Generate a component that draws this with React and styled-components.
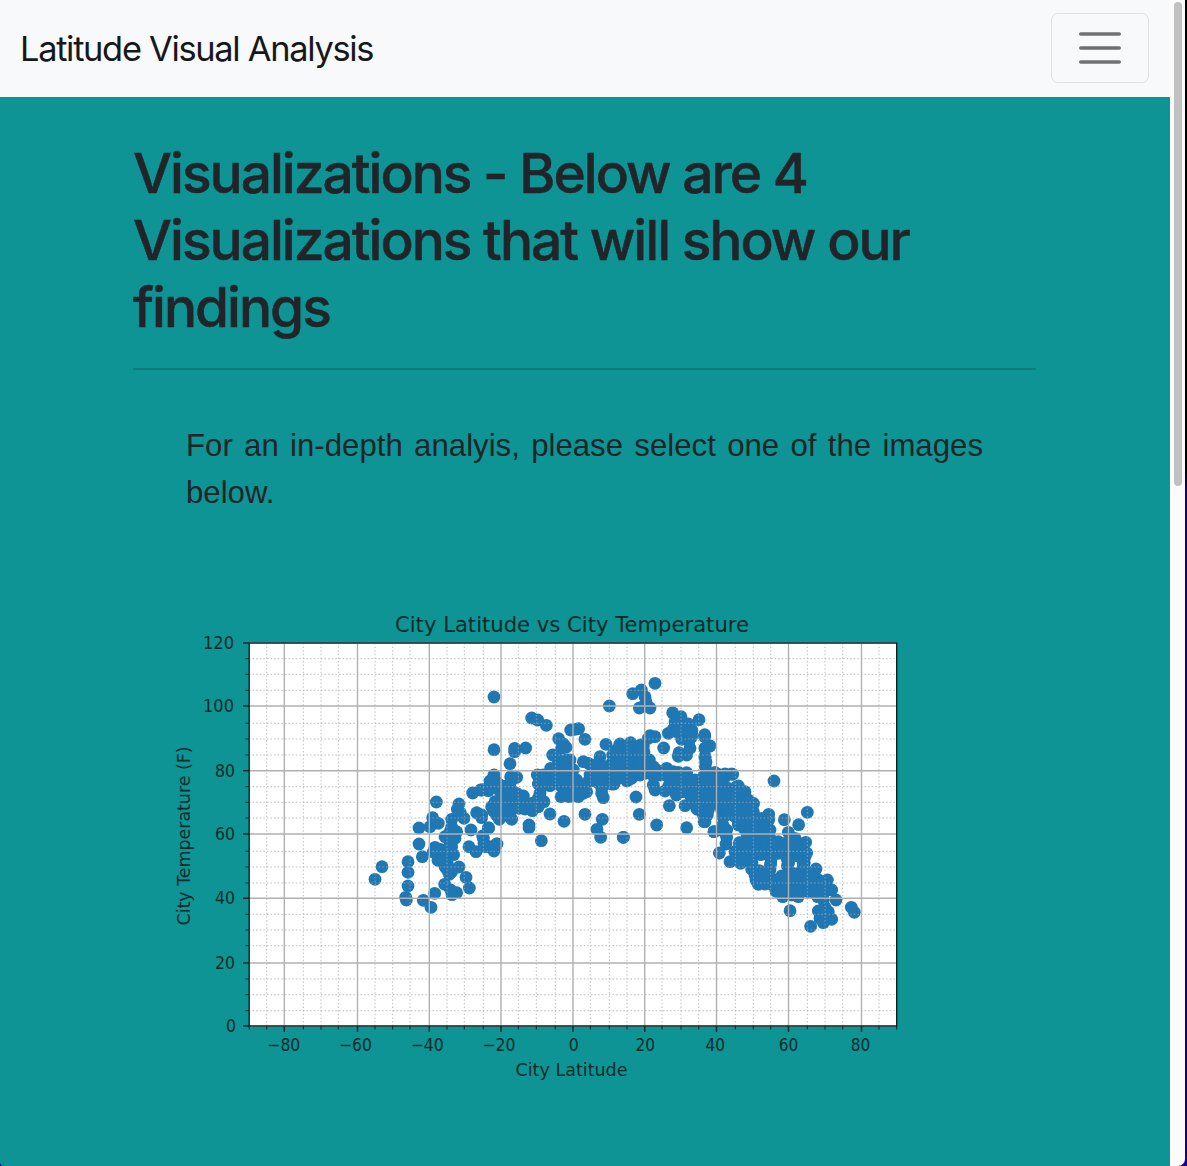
import React from "react";
import styled, { createGlobalStyle } from "styled-components";

const GlobalStyle = createGlobalStyle`
  *, *::before, *::after { box-sizing: border-box; }
  html, body { margin: 0; height: 100%; overflow: hidden; }
  body { background: #0e9494; color: #212529; font-family: Inter, "Liberation Sans", sans-serif; }
`;

const Window = styled.div`
  display: flex;
  width: 1187px;
  height: 1166px;
  background: linear-gradient(#000 0 470px, #14007c 490px 1110px, #1b0090 1166px);
`;

const Page = styled.div`
  width: 1170px;
  height: 100%;
  background: #0e9494;
  border-bottom-left-radius: 4px;
  overflow: hidden;
`;

const Navbar = styled.nav`
  display: flex;
  align-items: center;
  justify-content: space-between;
  height: 97px;
  padding: 0 21px 0 20px;
  background: #f8f9fb;
`;

const Brand = styled.a`
  display: block;
  color: #17181a;
  font-size: 34.4px;
  line-height: 52px;
  letter-spacing: -1.3px;
  white-space: nowrap;
`;

const Toggler = styled.button`
  display: flex;
  align-items: center;
  justify-content: center;
  width: 98px;
  height: 70px;
  margin: 0 0 1px;
  padding: 0;
  border: 1px solid #dfe0e2;
  border-radius: 7px;
  background: transparent;
`;

const Content = styled.main`
  width: 903px;
  margin-left: 133px;
  padding-top: 43px;
`;

const Heading = styled.h1`
  margin: 0;
  font-size: 55px;
  font-weight: 500;
  line-height: 67px;
  letter-spacing: -1.97px;
  white-space: nowrap;
  -webkit-text-stroke: 0.5px currentColor;
`;

const Rule = styled.hr`
  height: 2px;
  margin: 27px 0 0;
  border: 0;
  background: #107b7d;
`;

const Intro = styled.p`
  width: 797px;
  margin: 52px 0 0 53px;
  font-family: "Liberation Sans", Arial, sans-serif;
  font-size: 31.2px;
  line-height: 47px;
  text-align: justify;
`;

const Figure = styled.figure`
  width: 760px;
  margin: 87px 0 0 27px;
`;

const Chart = styled.svg`
  display: block;
  width: 760px;
  height: 490px;
  font-family: "DejaVu Sans", sans-serif;
  fill: #072b2c;
`;

const ScrollTrack = styled.div`
  width: 15px;
  height: 100%;
  padding: 2px 3px 0 4px;
  background: #fbfbfb;
  border-bottom-right-radius: 7px;
`;

const ScrollThumb = styled.div`
  width: 8px;
  height: 484px;
  border-radius: 4px;
  background: #c1c1c1;
`;

// Position of the grid line, tick label, position of the label.
const xMajor = [[284.3, "−80", 283.8], [357.5, "−60", 355.5], [429.3, "−40", 427.2], [501, "−20", 498.9], [573, "0", 573.7], [644.7, "20", 645.2], [716.5, "40", 715.2], [788.5, "60", 788.6], [861.5, "80", 860.4]];
const xMinor = [266.7, 303.3, 321, 338.3, 375, 392.7, 410, 447, 464.3, 483.3, 518.3, 536.3, 555.3, 590.3, 609.3, 627, 662, 681, 698.7, 735.3, 753.3, 770.7, 807.3, 825, 842.7, 879];
const yMajor = [[643, "120"], [706, "100"], [770.7, "80"], [834, "60"], [898.3, "40"], [963, "20"], [1026, "0"]];
const yMinor = [658.7, 674.3, 690.3, 723.3, 739, 755, 786.7, 802.3, 818, 851.3, 867, 883, 914.3, 930, 945.7, 979, 994.7, 1010.7];

// Each cluster has an origin; its offsets are in thirds of a unit.
const clusters = [
  {
    x: 360, y: 730,
    points: "45,448 66,410 144,395 144,427 144,468 137,502 139,510 190,511 213,532 224,490 276,494 290,488 272,480 254,463 328,474 318,442 297,411 262,420 268,433 255,410 187,380 177,342 177,294 210,290 218,263 235,280 229,216 225,352 229,370 234,391 220,366 242,358 248,378 281,374 275,350 255,320 290,305 275,290 275,268 312,265 297,222 292,238 301,248 270,335 350,248 365,263 333,300 385,295 368,318 372,340 327,350 348,365 411,342 402,363 390,352 338,189 362,180 262,368 285,325 270,305 268,350 262,402 275,425"
  },
  {
    x: 480, y: 660,
    points: "42,111 42,269 155,174 173,180 199,196 388,138 272,210 285,208 296,206 315,238 236,236 250,252 258,262 245,265 218,285 104,265 104,275 137,264 90,311 42,345 30,363 14,388 45,360 50,385 25,392 5,390 92,350 110,352 98,358 85,375 60,393 75,390 78,405 35,440 60,418 60,445 58,478 50,466 40,452 80,430 95,418 95,435 95,478 90,460 105,415 130,408 115,425 117,445 135,447 130,430 155,430 157,452 175,440 192,425 175,415 180,400 172,345 175,372 190,345 190,377 215,345 210,377 225,350 212,325 235,305 245,325 260,300 270,300 235,300 245,350 243,378 243,410 258,385 267,410 270,380 270,350 280,330 290,360 290,385 295,410 310,400 315,375 320,395 330,345 325,365 310,305 325,310 345,315 340,330 360,290 360,310 360,340 350,365 370,375 365,385 370,413 385,350 395,372 400,345 410,320 400,285 395,310 420,290 420,255 435,260 378,253 430,320 440,345 430,300 445,360 445,285 210,462 252,484 315,463 367,478 351,508 362,532 430,532 184,542 147,495 147,503 26,503 5,465 10,535 50,552 15,560 35,560 75,465 75,445 45,425 60,455 110,400 100,395 190,362 200,360 230,370 258,330 260,355 258,370 255,402 280,400 280,375 305,385 265,320 345,345 380,370 385,330 375,325 425,340 415,355 430,275 60,375 30,382 230,330 230,350 250,345 275,365 90,380 365,355 365,400"
  },
  {
    x: 610, y: 660,
    points: "135,70 68,101 94,90 105,110 108,125 88,144 120,144 188,158 213,170 195,185 235,192 267,179 175,220 190,207 210,205 215,220 230,215 245,210 245,220 215,238 284,224 284,230 298,258 285,265 237,243 240,265 230,285 207,278 205,289 285,290 288,305 286,320 120,227 135,230 115,235 161,264 30,252 62,248 75,260 92,255 45,262 100,258 8,285 10,310 30,290 30,310 30,330 5,340 12,372 10,360 40,345 55,350 50,362 65,355 85,330 75,300 90,290 100,305 65,310 102,275 110,320 118,300 105,340 130,320 140,330 150,345 170,325 190,335 130,348 140,345 130,375 135,390 165,345 190,350 205,337 230,338 180,360 190,375 200,390 175,380 165,393 199,405 215,380 230,380 200,365 178,437 225,437 225,395 240,405 240,385 260,370 255,360 265,400 260,430 262,448 280,465 285,485 275,440 285,420 290,385 295,360 315,338 300,345 300,410 295,435 292,465 315,370 320,400 320,430 350,345 368,343 330,345 340,385 350,410 380,380 370,400 405,395 390,415 400,440 350,440 370,430 430,430 415,420 78,411 88,463 140,495 230,503 40,532 312,515 340,473 340,500 350,510 15,325 22,345 70,335 90,345 85,315 20,270 55,270 85,275 250,375 250,395 245,410 250,430 270,385 275,365 275,405 280,380 300,385 310,420 275,450 215,395 340,360 330,375 335,415 335,450 360,455 385,440 225,200 200,215 228,230 245,230 215,365 240,360"
  },
  {
    x: 690, y: 730,
    points: "43,18 60,48 45,55 45,80 47,97 75,128 105,132 125,132 10,160 10,185 10,210 20,235 40,140 40,165 40,190 40,215 42,245 42,275 55,240 65,150 65,175 65,200 62,225 90,163 90,185 90,210 115,175 115,200 115,225 100,240 100,260 98,285 72,305 100,304 145,168 163,187 140,190 140,215 140,240 140,265 145,285 165,210 165,235 165,260 165,285 165,300 190,222 190,245 190,270 190,295 190,318 215,265 236,253 236,270 215,290 215,315 215,340 215,365 240,300 240,325 240,350 240,370 190,350 190,375 195,340 265,335 265,360 265,370 148,338 148,350 110,322 108,342 88,369 120,395 135,365 140,385 152,400 165,375 175,390 185,418 195,435 198,450 205,463 220,430 225,462 240,420 240,440 245,463 262,450 258,484 278,500 290,480 285,440 292,407 300,425 300,455 310,480 325,500 340,470 340,440 337,420 340,400 345,380 323,378 303,375 290,355 310,360 285,340 350,369 347,337 315,325 295,307 283,269 326,284 352,247 252,153 378,417 370,440 365,470 385,450 390,480 412,450 410,475 420,478 400,490 425,480 438,510 383,500 400,510 385,543 390,565 400,578 425,568 415,545 405,532 362,589 300,542 484,532 493,547 318,345 128,255 375,490 355,485 25,175 25,200 25,220 52,205 52,180 52,160 78,175 78,200 103,185 103,210 128,190 128,215 128,238 110,250 152,225 152,250 152,272 178,250 178,275 178,300 203,280 203,305 203,330 203,355 228,285 228,312 228,338 228,360 178,340 178,362 252,345 275,350 280,365 298,340 325,355 335,365 210,450 275,460 285,455 315,440 325,455 320,480 305,495 355,450 355,430 370,455 380,465 398,460 400,475 395,545 405,560 405,550 186,398 243,388 242,402 292,388 296,398 343,398 340,410 213,374 182,385 165,388 208,422 275,438 318,432 170,325 165,355 160,370 240,410"
  }
];

const cities = clusters.flatMap(({ x, y, points }) =>
  points.split(" ").map((pair) => {
    const [dx, dy] = pair.split(",").map(Number);
    return [x + dx / 3, y + dy / 3];
  })
);

function ScatterPlot() {
  return (
    <Chart viewBox="160 603 760 490" role="img" aria-label="City Latitude vs City Temperature">
      <rect x="249" y="643" width="648" height="383" fill="#fff" />
      <g fill="#1f77b4">
        {cities.map(([x, y], i) => <circle key={i} cx={x} cy={y} r="6.4" />)}
      </g>
      <g stroke="#aaa" strokeWidth="1" strokeDasharray="1.4 2.2" opacity="0.8">
        {xMinor.map((x) => <path key={x} d={`M${x} 1026V643`} />)}
        {yMinor.map((y) => <path key={y} d={`M249 ${y}H897`} />)}
      </g>
      <g stroke="#b0b0b0" strokeWidth="1.4">
        {xMajor.map(([x]) => <path key={x} d={`M${x} 1026V643`} />)}
        {yMajor.map(([y]) => <path key={y} d={`M249 ${y}H897`} />)}
      </g>
      <g stroke="#082526" strokeWidth="1.4" fill="none">
        <rect x="249.2" y="643" width="647.5" height="383" />
        {xMajor.map(([x]) => <path key={x} d={`M${x} 1026v6`} />)}
        {yMajor.map(([y]) => <path key={y} d={`M249 ${y}h-6`} />)}
        {[...xMinor, 249.2, 896.7].map((x) => <path key={x} strokeWidth="1" d={`M${x} 1026v3.5`} />)}
        {yMinor.map((y) => <path key={y} strokeWidth="1" d={`M249 ${y}h-3.5`} />)}
      </g>
      <g fontSize="17.5" textAnchor="middle">
        {xMajor.map(([, label, x]) => (
          <text key={label} x={x} y="1051" textLength={[0, 10, 19.5, 33][label.length]} lengthAdjust="spacingAndGlyphs">{label}</text>
        ))}
      </g>
      <g fontSize="17.5" textAnchor="end">
        {yMajor.map(([y, label]) => (
          <text key={label} x={label === "0" ? 236 : label.length > 2 ? 234 : 235} y={y + 6} textLength={[0, 10, 20, 31][label.length]} lengthAdjust="spacingAndGlyphs">{label}</text>
        ))}
      </g>
      <text x="572" y="631.7" fontSize="21.3" textAnchor="middle" textLength="354" lengthAdjust="spacingAndGlyphs">City Latitude vs City Temperature</text>
      <text x="571.5" y="1076" fontSize="17.8" textAnchor="middle" textLength="112" lengthAdjust="spacingAndGlyphs">City Latitude</text>
      <text transform="translate(190 836) rotate(-90)" fontSize="17.8" textAnchor="middle" textLength="179" lengthAdjust="spacingAndGlyphs">City Temperature (F)</text>
    </Chart>
  );
}

export default function App() {
  return (
    <>
      <GlobalStyle />
      <Window>
        <Page>
          <Navbar>
            <Brand>Latitude Visual Analysis</Brand>
            <Toggler aria-label="Toggle navigation">
              <svg width="42" height="34" viewBox="0 0 42 34" stroke="#6f7071" strokeWidth="3.4" strokeLinecap="round">
                <path d="M1.7 3H40.3M1.7 17H40.3M1.7 31H40.3" />
              </svg>
            </Toggler>
          </Navbar>
          <Content>
            <Heading>
              Visualizations - Below are 4<br />
              Visualizations that will show our<br />
              findings
            </Heading>
            <Rule />
            <Intro>For an in-depth analyis, please select one of the images below.</Intro>
            <Figure>
              <ScatterPlot />
            </Figure>
          </Content>
        </Page>
        <ScrollTrack>
          <ScrollThumb />
        </ScrollTrack>
      </Window>
    </>
  );
}
